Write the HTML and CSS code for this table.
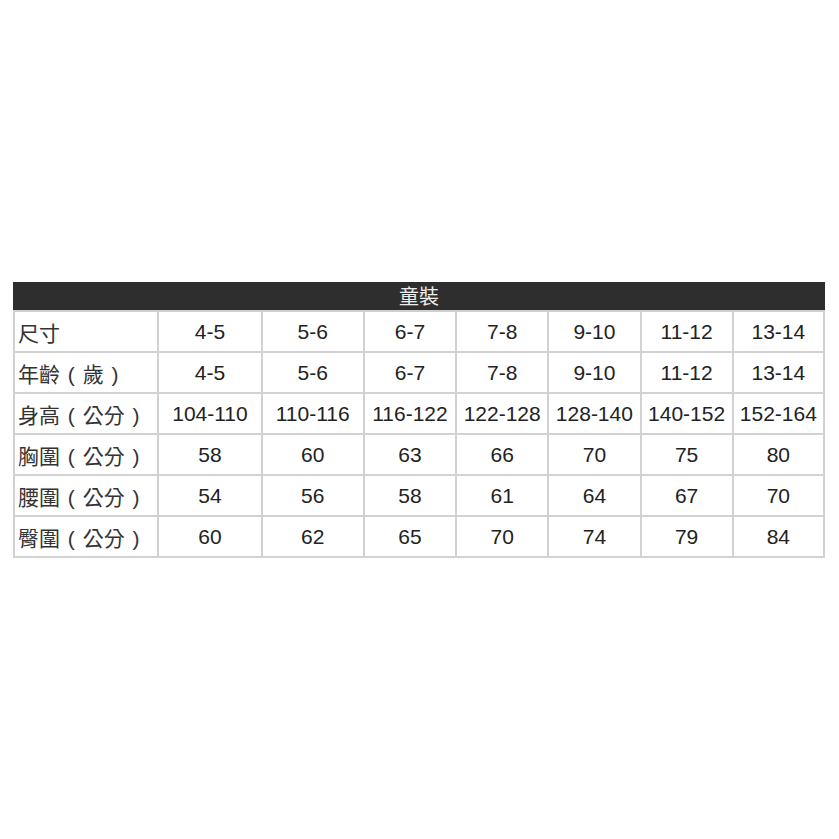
FILE: index.html
```html
<!DOCTYPE html>
<html lang="zh-Hant">
<head>
<meta charset="utf-8">
<link rel="stylesheet" href="styles.css">
</head>
<body>
<div class="page">
<table class="size-table">
<colgroup>
<col class="c-label"><col class="c-wide"><col class="c-mid"><col class="c-n"><col class="c-n"><col class="c-n"><col class="c-n"><col class="c-last">
</colgroup>
<thead>
<tr><th colspan="8" class="title">童裝</th></tr>
</thead>
<tbody>
<tr><td class="label">尺寸</td><td>4-5</td><td>5-6</td><td>6-7</td><td>7-8</td><td>9-10</td><td>11-12</td><td>13-14</td></tr>
<tr><td class="label">年齡 ( 歲 )</td><td>4-5</td><td>5-6</td><td>6-7</td><td>7-8</td><td>9-10</td><td>11-12</td><td>13-14</td></tr>
<tr><td class="label">身高 ( 公分 )</td><td>104-110</td><td>110-116</td><td>116-122</td><td>122-128</td><td>128-140</td><td>140-152</td><td>152-164</td></tr>
<tr><td class="label">胸圍 ( 公分 )</td><td>58</td><td>60</td><td>63</td><td>66</td><td>70</td><td>75</td><td>80</td></tr>
<tr><td class="label">腰圍 ( 公分 )</td><td>54</td><td>56</td><td>58</td><td>61</td><td>64</td><td>67</td><td>70</td></tr>
<tr><td class="label">臀圍 ( 公分 )</td><td>60</td><td>62</td><td>65</td><td>70</td><td>74</td><td>79</td><td>84</td></tr>
</tbody>
</table>
</div>
</body>
</html>
```
FILE: styles.css
```css
html, body {
  margin: 0;
  padding: 0;
  background: #ffffff;
}
.page {
  padding: 282px 14px 0 13px;
}
.size-table {
  width: 812px;
  table-layout: fixed;
  border-collapse: collapse;
  font-family: "Liberation Sans", "Noto Sans CJK TC", Arial, sans-serif;
  font-size: 21px;
  color: #222222;
}
.c-label { width: 144px; }
.c-wide { width: 103px; }
.c-mid { width: 102px; }
.c-n { width: 92px; }
.c-last { width: 91px; }
.title {
  background: #2e2e2e;
  color: #ececec;
  font-weight: normal;
  font-size: 20px;
  height: 26px;
  padding: 0;
  border: 2px solid #2e2e2e;
  border-bottom: 2px solid #cfcfcf;
  line-height: 24px;
  text-align: center;
}
.size-table td {
  border: 2px solid #d2d2d2;
  height: 39px;
  padding: 0;
  text-align: center;
  white-space: nowrap;
}
.size-table td.label {
  text-align: left;
  padding-left: 3px;
  word-spacing: 2px;
  color: #333333;
}
```
